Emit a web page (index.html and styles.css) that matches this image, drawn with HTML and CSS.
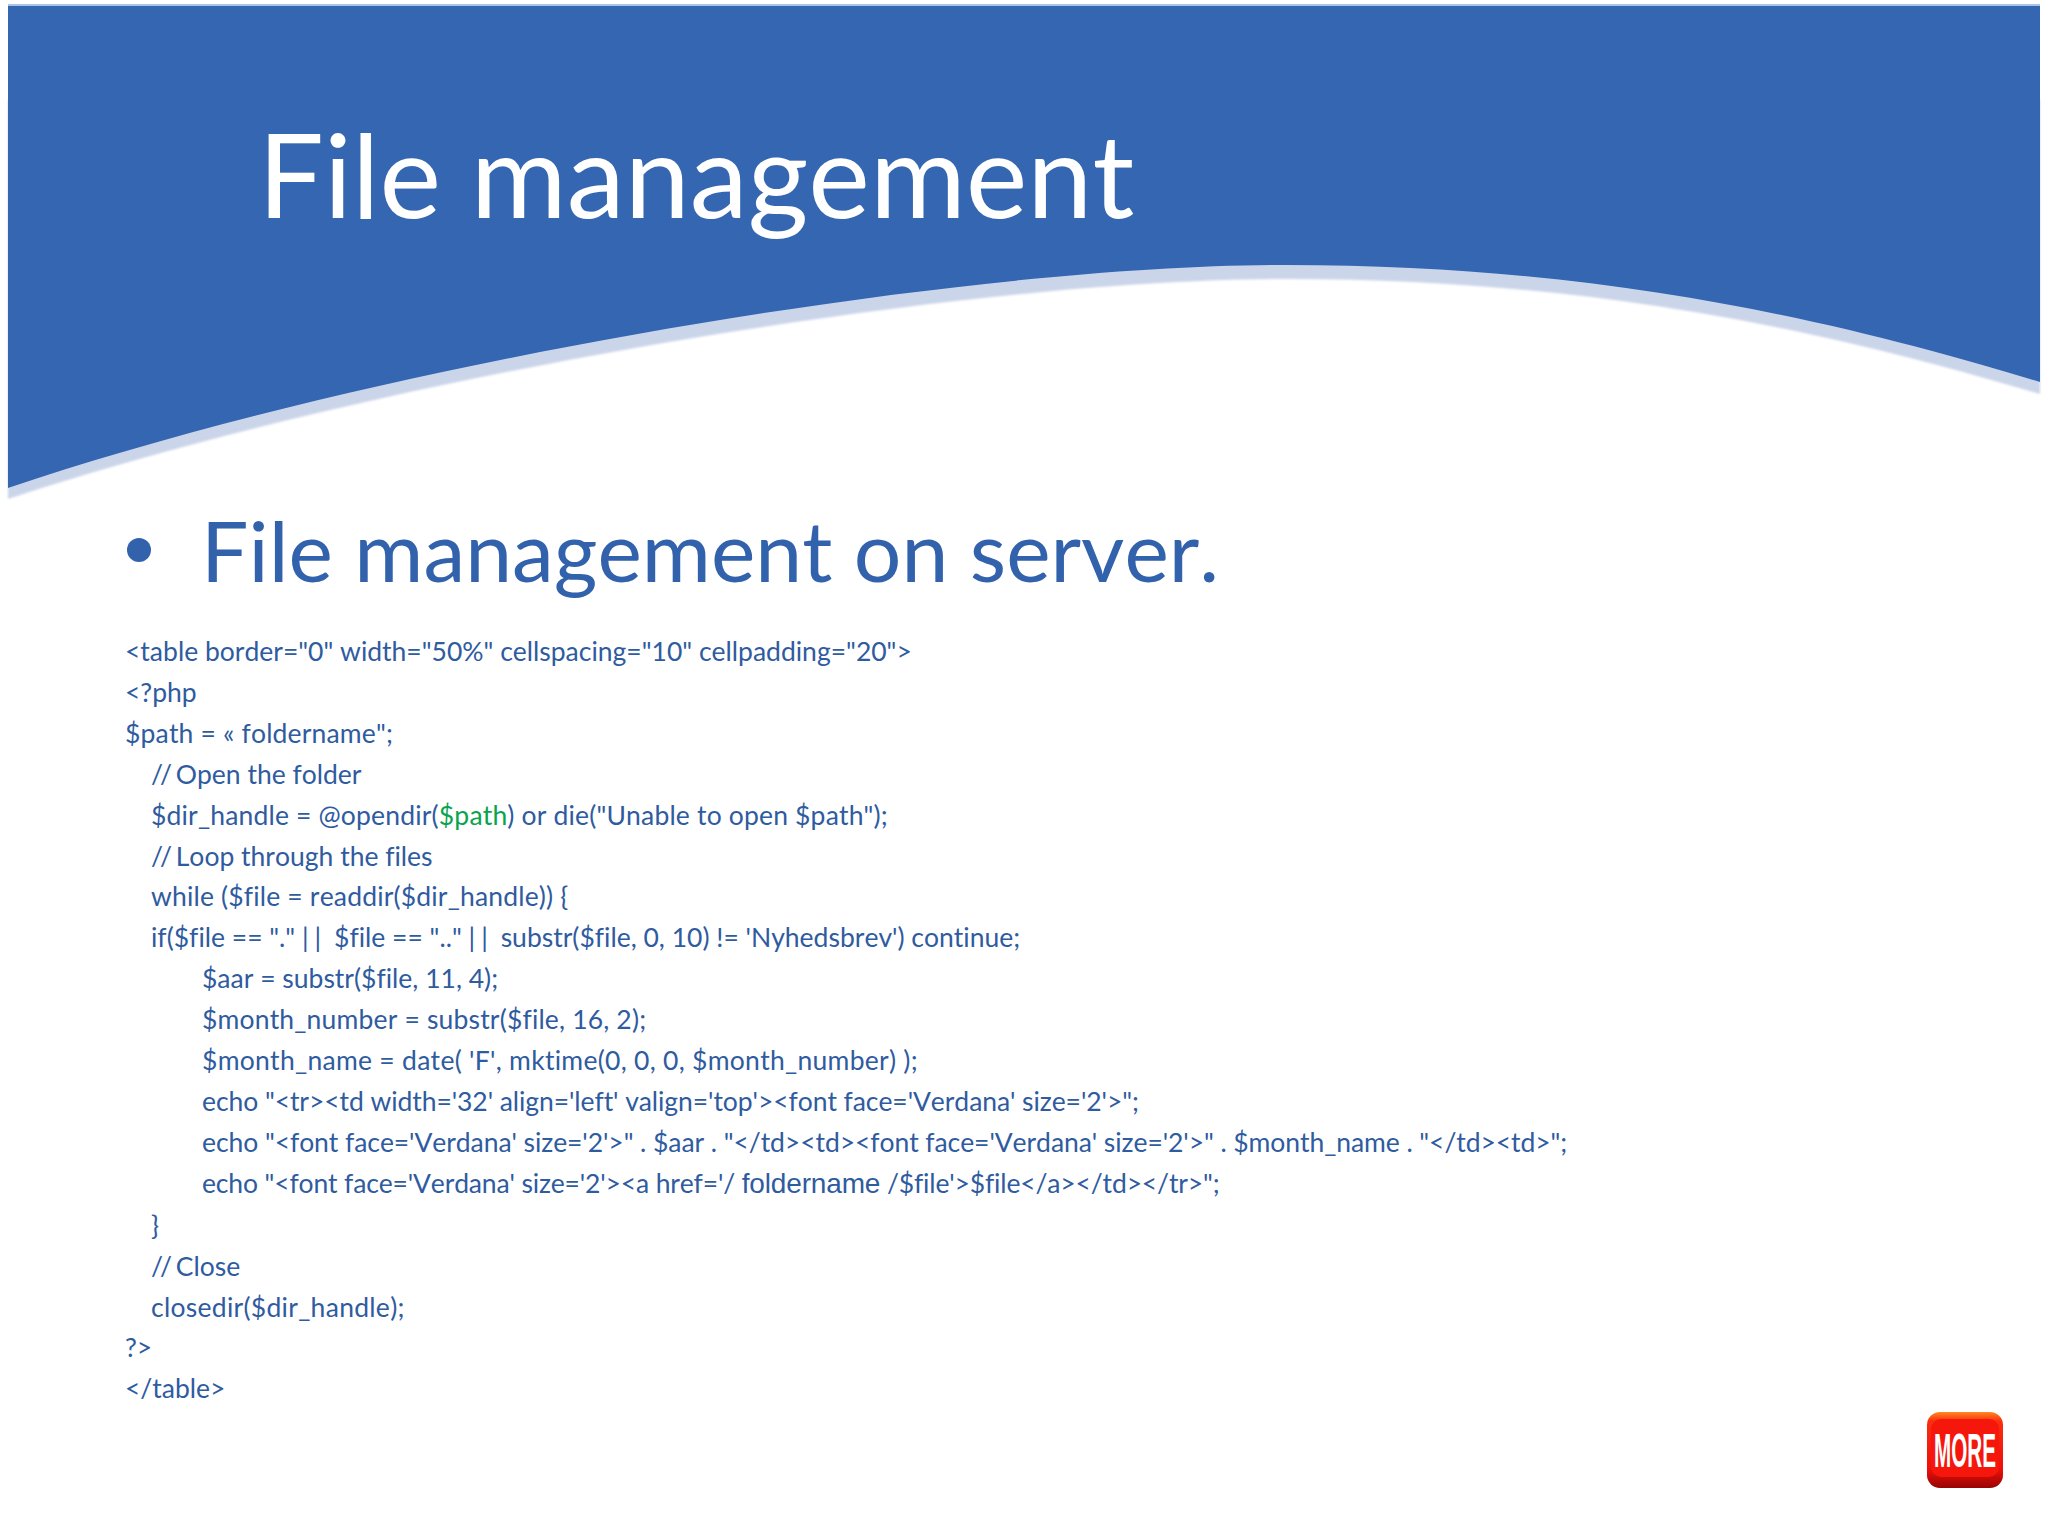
FILE: index.html
```html
<!DOCTYPE html>
<html lang="en">
<head>
<meta charset="utf-8">
<title>File management</title>
<link rel="stylesheet" href="styles.css">
</head>
<body>
<main class="slide">
  <svg class="wave" viewBox="0 0 2048 520" width="2048" height="520" aria-hidden="true">
    <defs>
      <filter id="soft" x="-2%" y="-5%" width="104%" height="110%"><feGaussianBlur stdDeviation="1.2"/></filter>
    </defs>
    <path class="wave-shadow" filter="url(#soft)" d="M8 100 H2040 V394 C1860 341 1620 279 1286 279 C960 279 380 376 8 499 Z"/>
    <path class="wave-top" d="M8 4 H2040 V8 H8 Z"/>
    <path class="wave-fill" d="M8 6 H2040 V382 C1860 328 1620 265 1286 265 C960 265 380 362 8 488 Z"/>
  </svg>
  <h1 class="title">File management</h1>
  <h2 class="bullet"><span class="dot"></span><span>File management on server.</span></h2>
  <div class="code">
    <div class="line">&lt;table border="0" width="50%" cellspacing="10" cellpadding="20"&gt;</div>
    <div class="line">&lt;?php</div>
    <div class="line w1">$path = « foldername";</div>
    <div class="line i1"><span class="slashes">//</span> Open the folder</div>
    <div class="line i1 w1">$dir_handle = @opendir(<span class="green">$path</span>) or die("Unable to open $path");</div>
    <div class="line i1"><span class="slashes">//</span> Loop through the files</div>
    <div class="line i1 w1">while ($file = readdir($dir_handle)) {</div>
    <div class="line i1">if($file == "." <span class="bars">||</span> $file == ".." <span class="bars">||</span> substr($file, 0, 10) != 'Nyhedsbrev') continue;</div>
    <div class="line i2">$aar = substr($file, 11, 4);</div>
    <div class="line i2 w1">$month_number = substr($file, 16, 2);</div>
    <div class="line i2 w2">$month_name = date( 'F', mktime(0, 0, 0, $month_number) );</div>
    <div class="line i2 n1">echo "&lt;tr&gt;&lt;td width='32' align='left' valign='top'&gt;&lt;font face='Verdana' size='2'&gt;";</div>
    <div class="line i2 n1">echo "&lt;font face='Verdana' size='2'&gt;" . $aar . "&lt;/td&gt;&lt;td&gt;&lt;font face='Verdana' size='2'&gt;" . $month_name . "&lt;/td&gt;&lt;td&gt;";</div>
    <div class="line i2 n2">echo "&lt;font face='Verdana' size='2'&gt;&lt;a href='/ <span class="arial">foldername</span> /$file'&gt;$file&lt;/a&gt;&lt;/td&gt;&lt;/tr&gt;";</div>
    <div class="line i1">}</div>
    <div class="line i1"><span class="slashes">//</span> Close</div>
    <div class="line i1 w2">closedir($dir_handle);</div>
    <div class="line">?&gt;</div>
    <div class="line">&lt;/table&gt;</div>
  </div>
  <svg class="more" viewBox="0 0 76 76" width="76" height="76" role="img" aria-label="MORE">
    <defs>
      <linearGradient id="moreEdge" x1="0" y1="0" x2="0" y2="1">
        <stop offset="0" stop-color="#ff8a20"/>
        <stop offset="0.12" stop-color="#fb2d10"/>
        <stop offset="0.75" stop-color="#ee0f0a"/>
        <stop offset="1" stop-color="#960404"/>
      </linearGradient>
    </defs>
    <rect x="0" y="0" width="76" height="76" rx="13" fill="url(#moreEdge)"/>
    <rect x="4" y="7" width="68" height="58" rx="10" fill="#f5160c"/>
    <text class="more-text" x="38" y="55" text-anchor="middle" textLength="62" lengthAdjust="spacingAndGlyphs">MORE</text>
  </svg>
</main>
</body>
</html>
```
FILE: styles.css
```css
html, body {
  margin: 0;
  padding: 0;
  background: #fff;
}

.slide {
  position: relative;
  width: 2048px;
  height: 1536px;
  overflow: hidden;
  font-family: Lato, "Open Sans", sans-serif;
  font-kerning: none;
  font-variant-ligatures: none;
}

.wave {
  position: absolute;
  left: 0;
  top: 0;
}

.wave-fill { fill: #3566b1; }
.wave-top { fill: #a9c4e6; }
.wave-shadow { fill: #cbd5ea; }

.title {
  position: relative;
  margin: 0;
  padding: 108px 0 0 258px;
  font-size: 116.6px;
  line-height: 130px;
  font-weight: 400;
  color: #fff;
}

.bullet {
  display: flex;
  align-items: center;
  margin: 0;
  padding: 262px 0 0 127px;
  height: 100px;
  font-size: 84px;
  line-height: 100px;
  font-weight: 400;
  color: #3362ad;
}

.dot {
  flex: none;
  width: 24px;
  height: 24px;
  margin-right: 50px;
  border-radius: 50%;
  background: #3362ad;
}

.code {
  padding: 31px 0 0 125px;
  font-size: 26.5px;
  line-height: 40.9px;
  color: #2f5b9f;
}

.line { white-space: pre; }
.i1 { padding-left: 26px; }
.i2 { padding-left: 77px; }
.w1 { letter-spacing: 0.17px; }
.w2 { letter-spacing: 0.28px; }
.n1 { letter-spacing: -0.07px; }
.n2 { letter-spacing: -0.15px; }
.slashes { letter-spacing: -3px; }
.bars { letter-spacing: 6px; }
.green { color: #0aa34f; }
.arial {
  font-family: "Liberation Sans", Arial, sans-serif;
  font-size: 28px;
}

.more {
  position: absolute;
  left: 1927px;
  top: 1412px;
}

.more-text {
  font-family: "Liberation Sans", Arial, sans-serif;
  font-size: 48px;
  font-weight: 700;
  fill: #fff;
}
```
